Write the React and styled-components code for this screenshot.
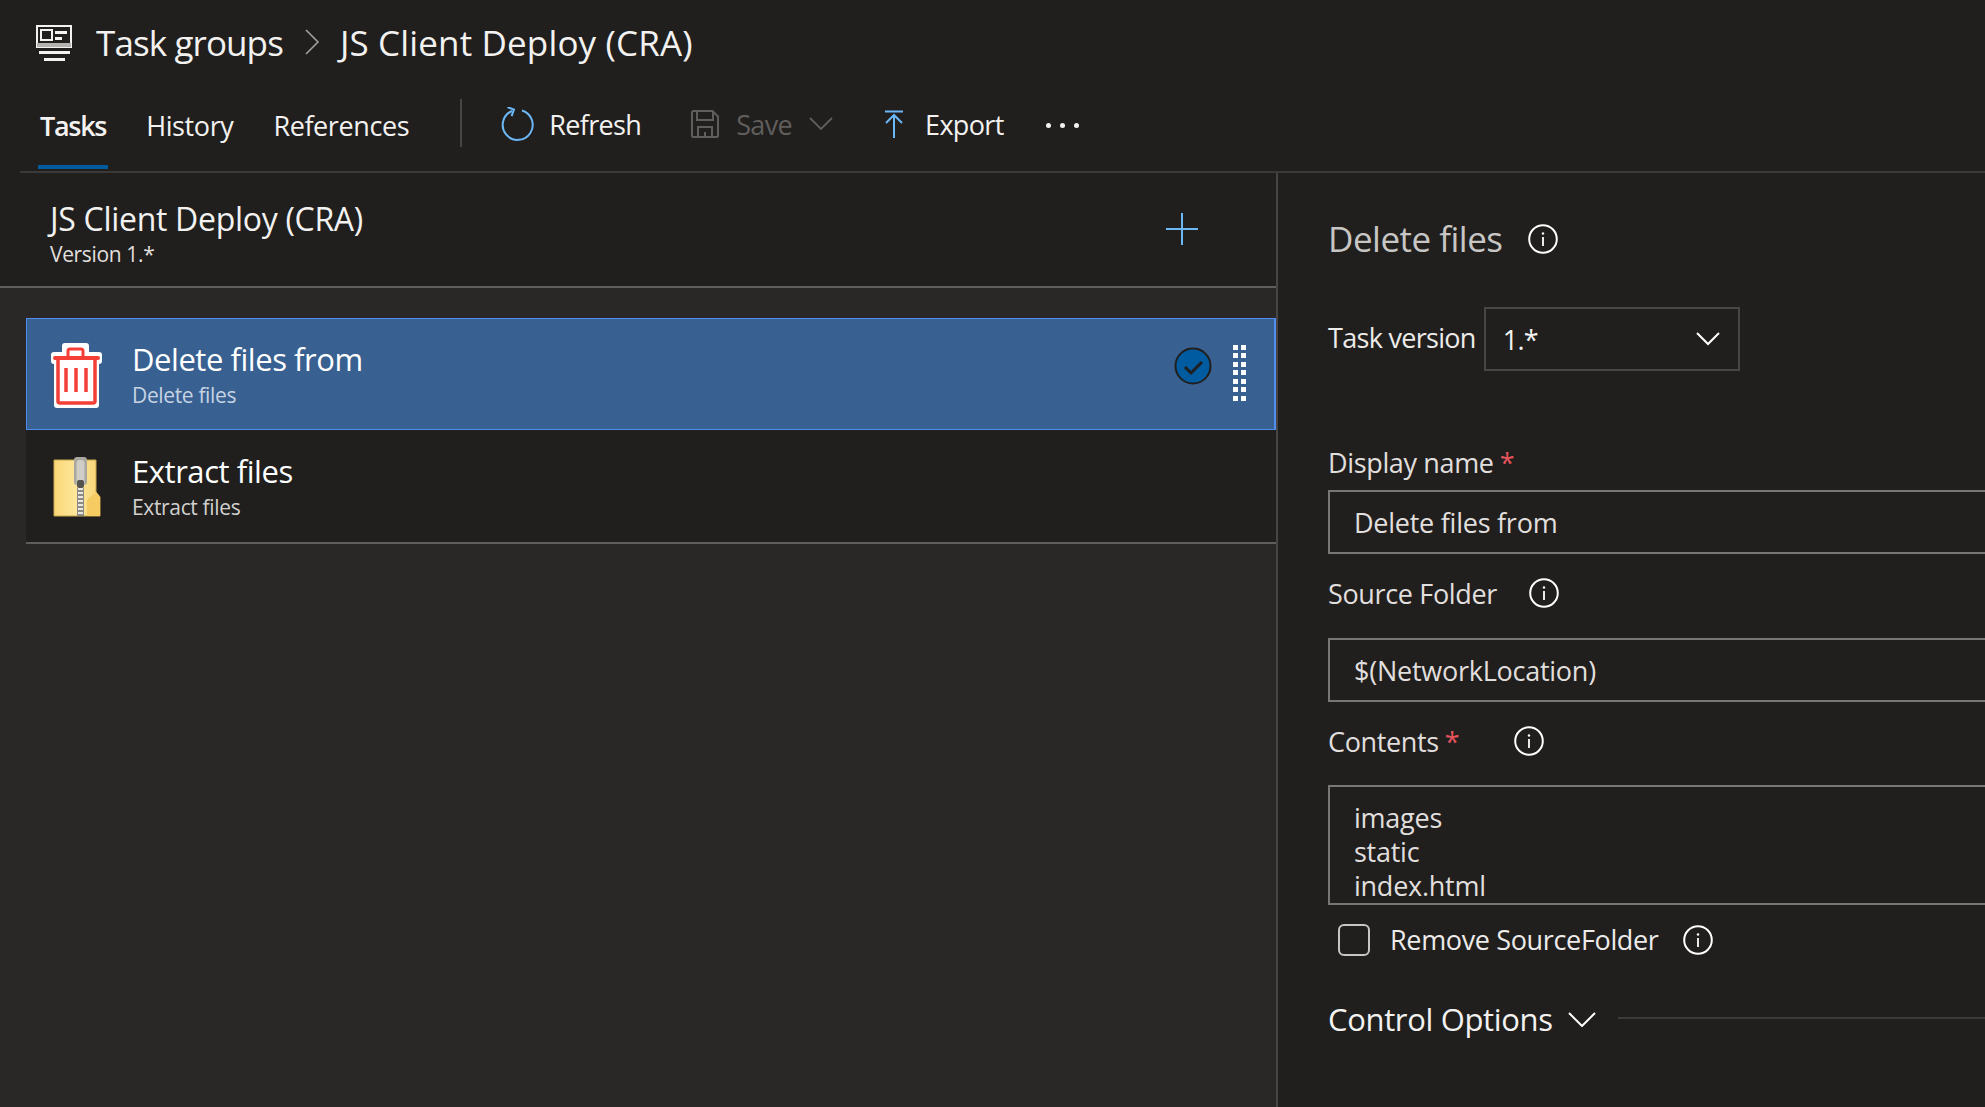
import React from "react";
import styled, { createGlobalStyle } from "styled-components";

const Global = createGlobalStyle`
  html, body { margin: 0; padding: 0; height: 100%; background: #201f1e; overflow: hidden; }
  #root { height: 100%; }
  * { box-sizing: border-box; }
`;

const Page = styled.div`
  width: 1985px; height: 1107px; overflow: hidden; background: #201f1e; color: #f3f2f1;
  font-family: "Open Sans", "Noto Sans", "Liberation Sans", sans-serif;
  display: flex; flex-direction: column;
`;
const TitleRow = styled.div`
  height: 86px; display: flex; align-items: center; padding: 0 0 0 36px; flex: none;
`;
const TitleIcon = styled.svg`width: 36px; height: 36px; margin: -1px 24px 0 0; flex: none;`;
const Crumb = styled.span`font-size: 35px; line-height: 44px; letter-spacing: ${p => p.$ls}px; color: #f3f2f1; white-space: nowrap;`;
const CrumbSep = styled.svg`width: 16px; height: 28px; margin: -2px 20px 0 21px; flex: none;`;

const Toolbar = styled.div`
  height: 87px; margin-left: 20px; border-bottom: 2px solid #3b3a39; display: flex; align-items: stretch; flex: none;
`;
const Tab = styled.div`
  margin: 0 36px 2px ${p => p.$lead || 0}px; padding: 4px 2px 5px; display: flex; align-items: center;
  font-size: 27px; letter-spacing: ${p => p.$active ? -1.3 : -0.4}px; font-weight: ${p => p.$active ? 600 : 400};
  border-bottom: 4px solid ${p => p.$active ? "#005a9e" : "transparent"};
  color: #f3f2f1;
`;
const VSep = styled.div`width: 2px; height: 48px; background: #484644; align-self: flex-start; margin: 13px 38px 0 13px;`;
const Action = styled.div`
  display: flex; align-items: center; padding-bottom: 9px; margin-right: ${p => p.$gap}px;
  font-size: 27px; letter-spacing: -0.65px; color: ${p => p.$off ? "#605e5c" : "#f3f2f1"};
`;
const ActionIcon = styled.svg`flex: none; width: ${p => p.$w}px; height: ${p => p.$h}px; margin-right: ${p => p.$gap}px;`;
const Dots = styled.div`
  display: flex; gap: 9px; align-items: center; padding-bottom: 6px;
  & > i { width: 5px; height: 5px; border-radius: 50%; background: #f3f2f1; }
`;

const Body = styled.div`flex: 1; display: grid; grid-template-columns: 1276px 2px 1fr; min-height: 0;`;
const Left = styled.div`background: #292827; display: flex; flex-direction: column;`;
const Divider = styled.div`background: #484644;`;
const LeftHead = styled.div`
  height: 115px; background: #201f1e; border-bottom: 2px solid #605e5c; display: flex; align-items: center;
  padding: 8px 78px 0 50px; justify-content: space-between; flex: none;
`;
const HeadTitle = styled.div`font-size: 32px; line-height: 40px; letter-spacing: -0.3px; color: #f3f2f1;`;
const HeadSub = styled.div`font-size: 21px; line-height: 28px; letter-spacing: -0.35px; color: #e1dfdd; margin-top: 1px;`;
const Plus = styled.svg`width: 32px; height: 32px; flex: none; margin-top: -9px;`;
const List = styled.div`margin: 30px 0 0 26px; display: flex; flex-direction: column;`;
const Row = styled.div`
  height: ${p => p.$sel ? 112 : 114}px; display: flex; align-items: center; padding: 0 28px 0 ${p => p.$sel ? 23 : 24}px;
  background: ${p => p.$sel ? "#386091" : "#201f1e"};
  border: ${p => p.$sel ? "1px solid #4f8ef0" : "none"};
  border-right-width: ${p => p.$sel ? 2 : 0}px;
  border-bottom: ${p => p.$sel ? "1px solid #4f8ef0" : "2px solid #605e5c"};
`;
const RowIcon = styled.svg`width: 56px; height: 68px; flex: none; margin-right: 26px;`;
const RowText = styled.div`flex: 1; min-width: 0;`;
const RowTitle = styled.div`font-size: 31px; line-height: 38px; letter-spacing: -0.45px; color: #fff;`;
const RowSub = styled.div`font-size: 21px; line-height: 28px; letter-spacing: -0.35px; margin-top: 3px; color: ${p => p.$sel ? "#c7d3e3" : "#d2d0ce"};`;
const Check = styled.svg`width: 38px; height: 38px; flex: none; margin: -17px 0 0 0;`;
const Grip = styled.div`
  display: grid; grid-template-columns: 5px 5px; gap: 3.5px 3.5px; margin: -3px 0 0 21px;
  & > i { width: 5px; height: 5px; background: #fff; }
`;

const Right = styled.div`background: #201f1e; padding: 42px 0 0 50px; overflow: hidden; min-width: 0;`;
const PaneTitle = styled.div`
  display: flex; align-items: center; font-size: 35px; line-height: 48px; letter-spacing: -0.5px; color: #c8c6c4;
`;
const Info = styled.svg`
  width: 30px; height: 30px; flex: none; margin-left: ${p => p.$ml}px;
`;
const VersionRow = styled.div`display: flex; align-items: center; margin-top: 44px; font-size: 27px; letter-spacing: -0.7px; color: #edebe9;`;
const VersionLabel = styled.span`margin-bottom: 3px; white-space: nowrap;`;
const VersionBox = styled.div`
  width: 256px; height: 64px; border: 2px solid #484644; margin-left: 8px; display: flex; align-items: center;
  justify-content: space-between; padding: 0 18px 0 17px; color: #f3f2f1;
`;
const Chev = styled.svg`flex: none; width: ${p => p.$w}px; height: ${p => p.$h}px; margin-left: ${p => p.$ml || 0}px;`;
const Label = styled.div`
  display: flex; align-items: center; height: 36px; margin-top: ${p => p.$top}px; font-size: 27px;
  letter-spacing: -0.35px; color: #e1dfdd; white-space: nowrap;
`;
const Star = styled.span`color: #e5535b; margin-left: 6px;`;
const Input = styled.div`
  width: 800px; height: ${p => p.$h || 64}px; margin-top: ${p => p.$top}px; border: 2px solid #797775; padding: ${p => p.$multi ? "14px 0 0 24px" : "2px 0 0 24px"};
  display: ${p => p.$multi ? "block" : "flex"}; align-items: center;
  font-size: 27px; line-height: 34px; letter-spacing: -0.25px; color: #e1dfdd; overflow: hidden;
`;
const CheckRow = styled.div`display: flex; align-items: center; margin: 16px 0 0 10px; font-size: 27px; letter-spacing: -0.35px; color: #edebe9;`;
const Box = styled.div`width: 32px; height: 32px; border: 2px solid #c8c6c4; border-radius: 6px; margin-right: 20px; flex: none;`;
const Section = styled.div`display: flex; align-items: center; margin-top: 40px; font-size: 31px; letter-spacing: -0.35px; color: #f3f2f1;`;
const SectionLine = styled.div`flex: 1; height: 2px; background: #3b3a39; margin: -2px 0 0 22px;`;

const InfoIcon = ({ ml }) => (
  <Info $ml={ml} viewBox="0 0 30 30" fill="none" stroke="#fff">
    <circle cx="15" cy="15" r="13.8" strokeWidth="2" />
    <line x1="15" y1="13" x2="15" y2="22" strokeWidth="1.8" />
    <circle cx="15" cy="9.5" r="1.2" fill="#fff" stroke="none" />
  </Info>
);

const Trash = () => (
  <RowIcon viewBox="0 0 56 68">
    <path d="M15 3h21a3 3 0 0 1 3 3v6h10a3 3 0 0 1 3 3v6a3 3 0 0 1-3 3v41a3 3 0 0 1-3 3H7a3 3 0 0 1-3-3V24a3 3 0 0 1-3-3v-6a3 3 0 0 1 3-3h8V6a3 3 0 0 1 3-3z" fill="#fff" />
    <path d="M5 18h43" stroke="#f43f37" strokeWidth="4" strokeLinecap="round" fill="none" />
    <path d="M18 17v-6a2 2 0 0 1 2-2h11a2 2 0 0 1 2 2v6" stroke="#f43f37" strokeWidth="3" fill="none" />
    <path d="M8 18v43a2 2 0 0 0 2 2h33a2 2 0 0 0 2-2V18" stroke="#f43f37" strokeWidth="3.5" fill="none" />
    <path d="M16 28v24M26 28v24M36 28v24" stroke="#f43f37" strokeWidth="3.5" fill="none" />
  </RowIcon>
);

const Zip = () => (
  <RowIcon viewBox="0 0 56 68">
    <defs>
      <linearGradient id="zf" x1="0" x2="1" y1="0" y2="0">
        <stop offset="0" stopColor="#fbd878" /><stop offset="0.5" stopColor="#fde79c" /><stop offset="1" stopColor="#f7d272" />
      </linearGradient>
    </defs>
    <path d="M4 8h42v32l4 5v19H4z" fill="url(#zf)" stroke="#c9a84e" strokeWidth="1" />
    <path d="M37 64V48l9-8 4 5v19z" fill="#f5cb62" />
    <rect x="24" y="5" width="13" height="28" rx="3" fill="#a9a79f" />
    <rect x="26.500" y="8" width="8" height="26" rx="3" fill="#cfcdc6" />
    <rect x="27" y="28" width="7" height="8" rx="2" fill="#55534f" />
    <rect x="27" y="36" width="7" height="28" fill="#8d8b84" />
    <path d="M30.500 36v28" stroke="#e8e6df" strokeWidth="5" strokeDasharray="2 2" />
  </RowIcon>
);

const Item = ({ sel, title, sub, icon }) => (
  <Row $sel={sel}>
    {icon}
    <RowText>
      <RowTitle>{title}</RowTitle>
      <RowSub $sel={sel}>{sub}</RowSub>
    </RowText>
    {sel && (
      <>
        <Check viewBox="0 0 38 38">
          <circle cx="19" cy="19" r="17.5" fill="#005ba1" stroke="#201f1e" strokeWidth="2" />
          <path d="M11 20l6 6 11-11" fill="none" stroke="#201f1e" strokeWidth="3" />
        </Check>
        <Grip>{Array.from({ length: 14 }, (_, i) => <i key={i} />)}</Grip>
      </>
    )}
  </Row>
);

export default function App() {
  return (
    <Page>
      <Global />
      <TitleRow>
        <TitleIcon viewBox="0 0 36 36" fill="none">
          <rect x="1" y="1" width="34" height="21" stroke="#f3f2f1" strokeWidth="2" />
          <rect x="1" y="18" width="34" height="4" fill="#b5b3b0" />
          <rect x="5" y="5" width="11" height="10" stroke="#f3f2f1" strokeWidth="2" />
          <path d="M19 6h12v3H19zM19 12h7v3h-7z" fill="#f3f2f1" />
          <path d="M3 26h31v3H3zM8 33h21v3H8z" fill="#f3f2f1" />
        </TitleIcon>
        <Crumb $ls={-0.9}>Task groups</Crumb>
        <CrumbSep viewBox="0 0 16 28" fill="none"><path d="M2 2l12 12L2 26" stroke="#a19f9d" strokeWidth="1.6" /></CrumbSep>
        <Crumb $ls={0.15}>JS Client Deploy (CRA)</Crumb>
      </TitleRow>

      <Toolbar>
        <Tab $active $lead={18}>Tasks</Tab>
        <Tab>History</Tab>
        <Tab>References</Tab>
        <VSep />
        <Action $gap={50}>
          <ActionIcon $w={34} $h={34} $gap={15} viewBox="0 0 34 34" fill="none">
            <path d="M12 4A15 15 0 1 0 22 3.5" stroke="#6cb8f6" strokeWidth="2" />
            <path d="M6 2h7v7" stroke="#6cb8f6" strokeWidth="2" transform="rotate(20 12 5)" />
          </ActionIcon>
          Refresh
        </Action>
        <Action $off $gap={51}>
          <ActionIcon $w={28} $h={28} $gap={17} viewBox="0 0 28 28" fill="none">
            <path d="M1 2.5A1.5 1.5 0 0 1 2.5 1h19L27 6.500v19a1.500 1.500 0 0 1-1.500 1.500h-23A1.5 1.5 0 0 1 1 25.500z" stroke="#605e5c" strokeWidth="2" />
            <path d="M6 1v9h16V1M7 27V17h14v10M14 27v-5" stroke="#605e5c" strokeWidth="2" />
          </ActionIcon>
          Save
          <Chev $ml={17} $w={24} $h={14} viewBox="0 0 24 14" fill="none">
            <path d="M1 1l11 11L23 1" stroke="#605e5c" strokeWidth="1.8" />
          </Chev>
        </Action>
        <Action $gap={42}>
          <ActionIcon $w={20} $h={28} $gap={21} viewBox="0 0 20 28" fill="none">
            <path d="M1 1.500h18M10 28V5M2 13l8-8 8 8" stroke="#6cb8f6" strokeWidth="2" />
          </ActionIcon>
          Export
        </Action>
        <Dots><i /><i /><i /></Dots>
      </Toolbar>

      <Body>
        <Left>
          <LeftHead>
            <div>
              <HeadTitle>JS Client Deploy (CRA)</HeadTitle>
              <HeadSub>Version 1.*</HeadSub>
            </div>
            <Plus viewBox="0 0 32 32" fill="none"><path d="M16 0v32M0 16h32" stroke="#6cb8f6" strokeWidth="2" /></Plus>
          </LeftHead>
          <List>
            <Item sel title="Delete files from" sub="Delete files" icon={<Trash />} />
            <Item title="Extract files" sub="Extract files" icon={<Zip />} />
          </List>
        </Left>
        <Divider />
        <Right>
          <PaneTitle>Delete files<InfoIcon ml={25} /></PaneTitle>
          <VersionRow>
            <VersionLabel>Task version</VersionLabel>
            <VersionBox>
              1.*
              <Chev $w={24} $h={14} viewBox="0 0 24 14" fill="none"><path d="M1 1l11 11L23 1" stroke="#fff" strokeWidth="2" /></Chev>
            </VersionBox>
          </VersionRow>
          <Label $top={73}>Display name<Star>*</Star></Label>
          <Input $top={10}>Delete files from</Input>
          <Label $top={21}>Source Folder<InfoIcon ml={32} /></Label>
          <Input $top={27}>$(NetworkLocation)</Input>
          <Label $top={21}>Contents<Star>*</Star><InfoIcon ml={55} /></Label>
          <Input $top={26} $h={120} $multi>images<br />static<br />index.html</Input>
          <CheckRow><Box />Remove SourceFolder<InfoIcon ml={24} /></CheckRow>
          <Section>
            Control Options
            <Chev $ml={15} $w={28} $h={15} viewBox="0 0 28 15" fill="none"><path d="M1 1l13 13L27 1" stroke="#fff" strokeWidth="2" /></Chev>
            <SectionLine />
          </Section>
        </Right>
      </Body>
    </Page>
  );
}
